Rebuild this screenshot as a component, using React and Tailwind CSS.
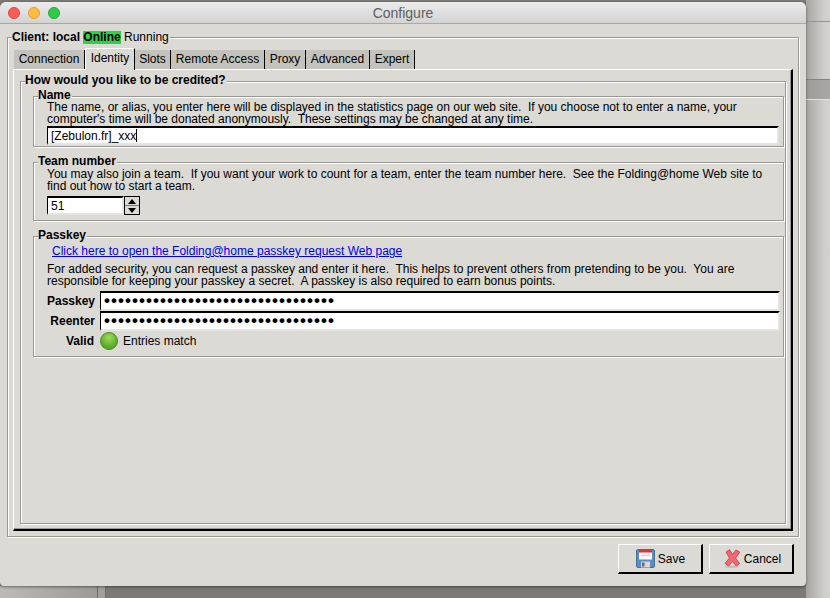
const tabs = [
  { label: 'Connection', width: 'w-[71px]' },
  { label: 'Identity', width: 'w-[50px]', active: true },
  { label: 'Slots', width: 'w-[36px]' },
  { label: 'Remote Access', width: 'w-[94px]' },
  { label: 'Proxy', width: 'w-[41px]' },
  { label: 'Advanced', width: 'w-[64px]' },
  { label: 'Expert', width: 'w-[45px]' },
]

const dots = '•'.repeat(33)

function Legend({ children }) {
  return <div className="absolute left-[4px] top-[-7px] bg-[#dbdad5] pr-[1px] text-[12px] leading-[10px] font-bold text-black whitespace-nowrap">{children}</div>
}

function Group({ title, className, children }) {
  return (
    <div className={`relative border border-[#999894] shadow-[inset_1px_1px_0_#fff,1px_1px_0_#fff] ${className}`}>
      <Legend>{title}</Legend>
      {children}
    </div>
  )
}

function Entry({ children, className }) {
  return (
    <div className={`flex items-center border-t-2 border-l border-t-black border-l-black border-r-2 border-b-2 border-r-[#e4e4e2] border-b-[#e4e4e2] bg-white pl-[3px] text-[12px] text-black ${className}`}>
      {children}
    </div>
  )
}

function SaveIcon() {
  return (
    <svg width="19" height="19" viewBox="0 0 19 19">
      <rect x="0.5" y="0.5" width="18" height="18" rx="1.5" fill="#5d8cc0" stroke="#46709f" />
      <rect x="3" y="1" width="13" height="9.5" fill="#f6f6f6" />
      <rect x="3" y="1" width="13" height="2.5" fill="#d8343c" />
      <rect x="5" y="6" width="9" height="1" fill="#cfcfcf" />
      <rect x="5" y="12.5" width="9" height="6" fill="#d8d8d8" />
      <rect x="6" y="13.5" width="2.5" height="4" fill="#5a6a7c" />
    </svg>
  )
}

function CancelIcon() {
  return (
    <svg width="17" height="19" viewBox="0 0 17 19">
      <ellipse cx="8" cy="17.8" rx="7" ry="1" fill="#bdbcb8" />
      <path d="M2 3 L5.5 0.8 L8.7 5.5 L12 1 L15.8 3.2 L11.5 9 L15.5 14.5 L12.2 17 L8.5 12.5 L4.5 17 L1 14.5 L5.5 9 Z" fill="#ee6a72" stroke="#cf4650" strokeWidth="1" strokeLinejoin="round" />
    </svg>
  )
}

function Button({ icon, label, gap }) {
  return (
    <div className={`flex h-[30px] w-[85px] items-center justify-center border-t border-l border-t-white border-l-white border-r-2 border-b-2 border-r-black border-b-black bg-[#dbdad5] text-[12px] text-black ${gap}`}>
      {icon}
      <span>{label}</span>
    </div>
  )
}

export default function App() {
  return (
    <div className="relative h-[598px] w-[830px] overflow-hidden bg-[#7b7a75] font-['Liberation_Sans',Arial,sans-serif]">
      {/* windows behind the dialog */}
      <div className="absolute left-[806px] top-0 h-[598px] w-[24px] bg-[linear-gradient(90deg,#a6a5a1_0%,#cfcec9_75%,#d3d2cd_100%)]" />
      <div className="absolute left-[806px] top-[21px] h-[1px] w-[24px] bg-[#94938f]" />
      <div className="absolute left-[806px] top-[79px] h-[21px] w-[24px] border-t border-b border-t-[#85847f] border-b-[#e3e2de] bg-[linear-gradient(90deg,#9d9c97,#a9a8a3)]" />
      <div className="absolute left-0 top-[586px] h-[12px] w-[97px] bg-[linear-gradient(90deg,#bcbbb7,#9b9a96)]" />
      <div className="absolute left-[97px] top-[586px] h-[12px] w-[9px] border-x border-[#6f6e6a] bg-[#a09f9b]" />

      <div className="relative mt-[2px] flex h-[584px] w-[806px] flex-col overflow-hidden rounded-t-[6px] rounded-b-[4px] bg-[#dbdad5] shadow-[0_1px_3px_rgba(0,0,0,0.45)]">
        <div className="relative flex h-[22px] shrink-0 items-center justify-center border-b border-[#a9a8a6] bg-[linear-gradient(180deg,#ebebeb,#d3d3d3)] pt-[1px]">
          <div className="absolute left-[8px] top-[5px] flex gap-[8px]">
            <div className="h-[12px] w-[12px] rounded-full border border-[#e2463f] bg-[#fc5b57]" />
            <div className="h-[12px] w-[12px] rounded-full border border-[#e0a028] bg-[#fdbc40]" />
            <div className="h-[12px] w-[12px] rounded-full border border-[#27aa35] bg-[#33c748]" />
          </div>
          <span className="text-[14px] text-[#5f5f5f]">Configure</span>
        </div>

        <div className="flex flex-1 flex-col px-[7px] pt-[13px]">
          <div className="relative h-[500px] w-[792px] border border-[#999894] shadow-[inset_1px_1px_0_#fff,1px_1px_0_#fff]">
            <div className="absolute left-[4px] top-[-7px] flex bg-[#dbdad5] pr-[1px] text-[12px] leading-[13px] text-black whitespace-nowrap">
              <span className="font-bold">Client: local&nbsp;</span>
              <span className="bg-[#2fd14a] font-bold">Online</span>
              <span>&nbsp;Running</span>
            </div>

            <div className="ml-[6px] mt-[12px] flex h-[19px] items-end">
              {tabs.map((tab) => (
                <div
                  key={tab.label}
                  className={`flex shrink-0 items-center justify-center border-r border-r-black text-[12px] text-black ${tab.width} ${tab.active ? 'relative z-10 mb-[-1px] h-[22px] border-t border-l border-t-white border-l-white bg-[#dbdad5] pb-[3px]' : 'h-[19px] bg-[#c3c2bd] pb-[1px]'}`}
                >
                  {tab.label}
                </div>
              ))}
            </div>

            <div className="ml-[5px] h-[462px] w-[780px] border-t border-l border-t-white border-l-white border-r-2 border-b-2 border-r-black border-b-black px-[6px] pt-[11px] shadow-[inset_-1px_-1px_0_#999894]">
              <Group title="How would you like to be credited?" className="h-[443px] w-[766px] pl-[12px] pt-[14px]">
                <Group title="Name" className="h-[51px] w-[751px] pl-[13px] pt-[4px]">
                  <p className="text-[12px] leading-[12px] text-black">
                    The name, or alias, you enter here will be displayed in the statistics page on our web site.&nbsp; If you choose not to enter a name, your<br />
                    computer's time will be donated anonymously.&nbsp; These settings may be changed at any time.
                  </p>
                  <Entry className="mt-[1px] h-[19px] w-[732px]">
                    <span>[Zebulon.fr]_xxx</span>
                    <span className="h-[13px] w-[1px] bg-black" />
                  </Entry>
                </Group>

                <Group title="Team number" className="mt-[15px] h-[59px] w-[751px] pl-[13px] pt-[5px]">
                  <p className="text-[12px] leading-[12px] text-black">
                    You may also join a team.&nbsp; If you want your work to count for a team, enter the team number here.&nbsp; See the Folding@home Web site to<br />
                    find out how to start a team.
                  </p>
                  <div className="mt-[4px] flex h-[19px] w-[94px]">
                    <Entry className="h-[19px] w-[77px]">51</Entry>
                    <div className="flex h-[19px] w-[16px] flex-col border border-black bg-[#dbdad5]">
                      <div className="flex flex-1 items-center justify-center border-b border-[#777]">
                        <div className="h-0 w-0 border-x-[4px] border-b-[5px] border-x-transparent border-b-black" />
                      </div>
                      <div className="flex flex-1 items-center justify-center">
                        <div className="h-0 w-0 border-x-[4px] border-t-[5px] border-x-transparent border-t-black" />
                      </div>
                    </div>
                  </div>
                </Group>

                <Group title="Passkey" className="mt-[15px] h-[121px] w-[751px] pt-[7px]">
                  <a className="ml-[18px] block text-[12px] leading-[14px] text-[#0000ee] underline">Click here to open the Folding@home passkey request Web page</a>
                  <p className="ml-[13px] mt-[5px] text-[12px] leading-[12px] text-black">
                    For added security, you can request a passkey and enter it here.&nbsp; This helps to prevent others from pretending to be you.&nbsp; You are<br />
                    responsible for keeping your passkey a secret.&nbsp; A passkey is also required to earn bonus points.
                  </p>
                  <div className="mt-[4px] flex h-[20px] items-center">
                    <span className="w-[61px] text-right text-[12px] font-bold text-black">Passkey</span>
                    <Entry className="ml-[5px] h-[20px] w-[680px]"><span className="text-[17px] leading-[14px] font-bold tracking-[1.05px]">{dots}</span></Entry>
                  </div>
                  <div className="flex h-[20px] items-center">
                    <span className="w-[61px] text-right text-[12px] font-bold text-black">Reenter</span>
                    <Entry className="ml-[5px] h-[20px] w-[680px]"><span className="text-[17px] leading-[14px] font-bold tracking-[1.05px]">{dots}</span></Entry>
                  </div>
                  <div className="mt-[1px] flex h-[18px] items-center">
                    <span className="w-[60px] text-right text-[12px] font-bold text-black">Valid</span>
                    <div className="ml-[6px] h-[18px] w-[18px] rounded-full border border-[#4a8a1e] bg-[radial-gradient(circle_at_50%_30%,#9fdc5a,#58a82a_70%)]" />
                    <span className="ml-[5px] text-[12px] text-black">Entries match</span>
                  </div>
                </Group>
              </Group>
            </div>
          </div>

          <div className="mt-[7px] flex w-[787px] justify-end gap-[6px]">
            <Button icon={<SaveIcon />} label="Save" gap="gap-[3px] pl-[1px]" />
            <Button icon={<CancelIcon />} label="Cancel" gap="gap-[3px] pl-[3px]" />
          </div>
        </div>
      </div>
    </div>
  )
}
